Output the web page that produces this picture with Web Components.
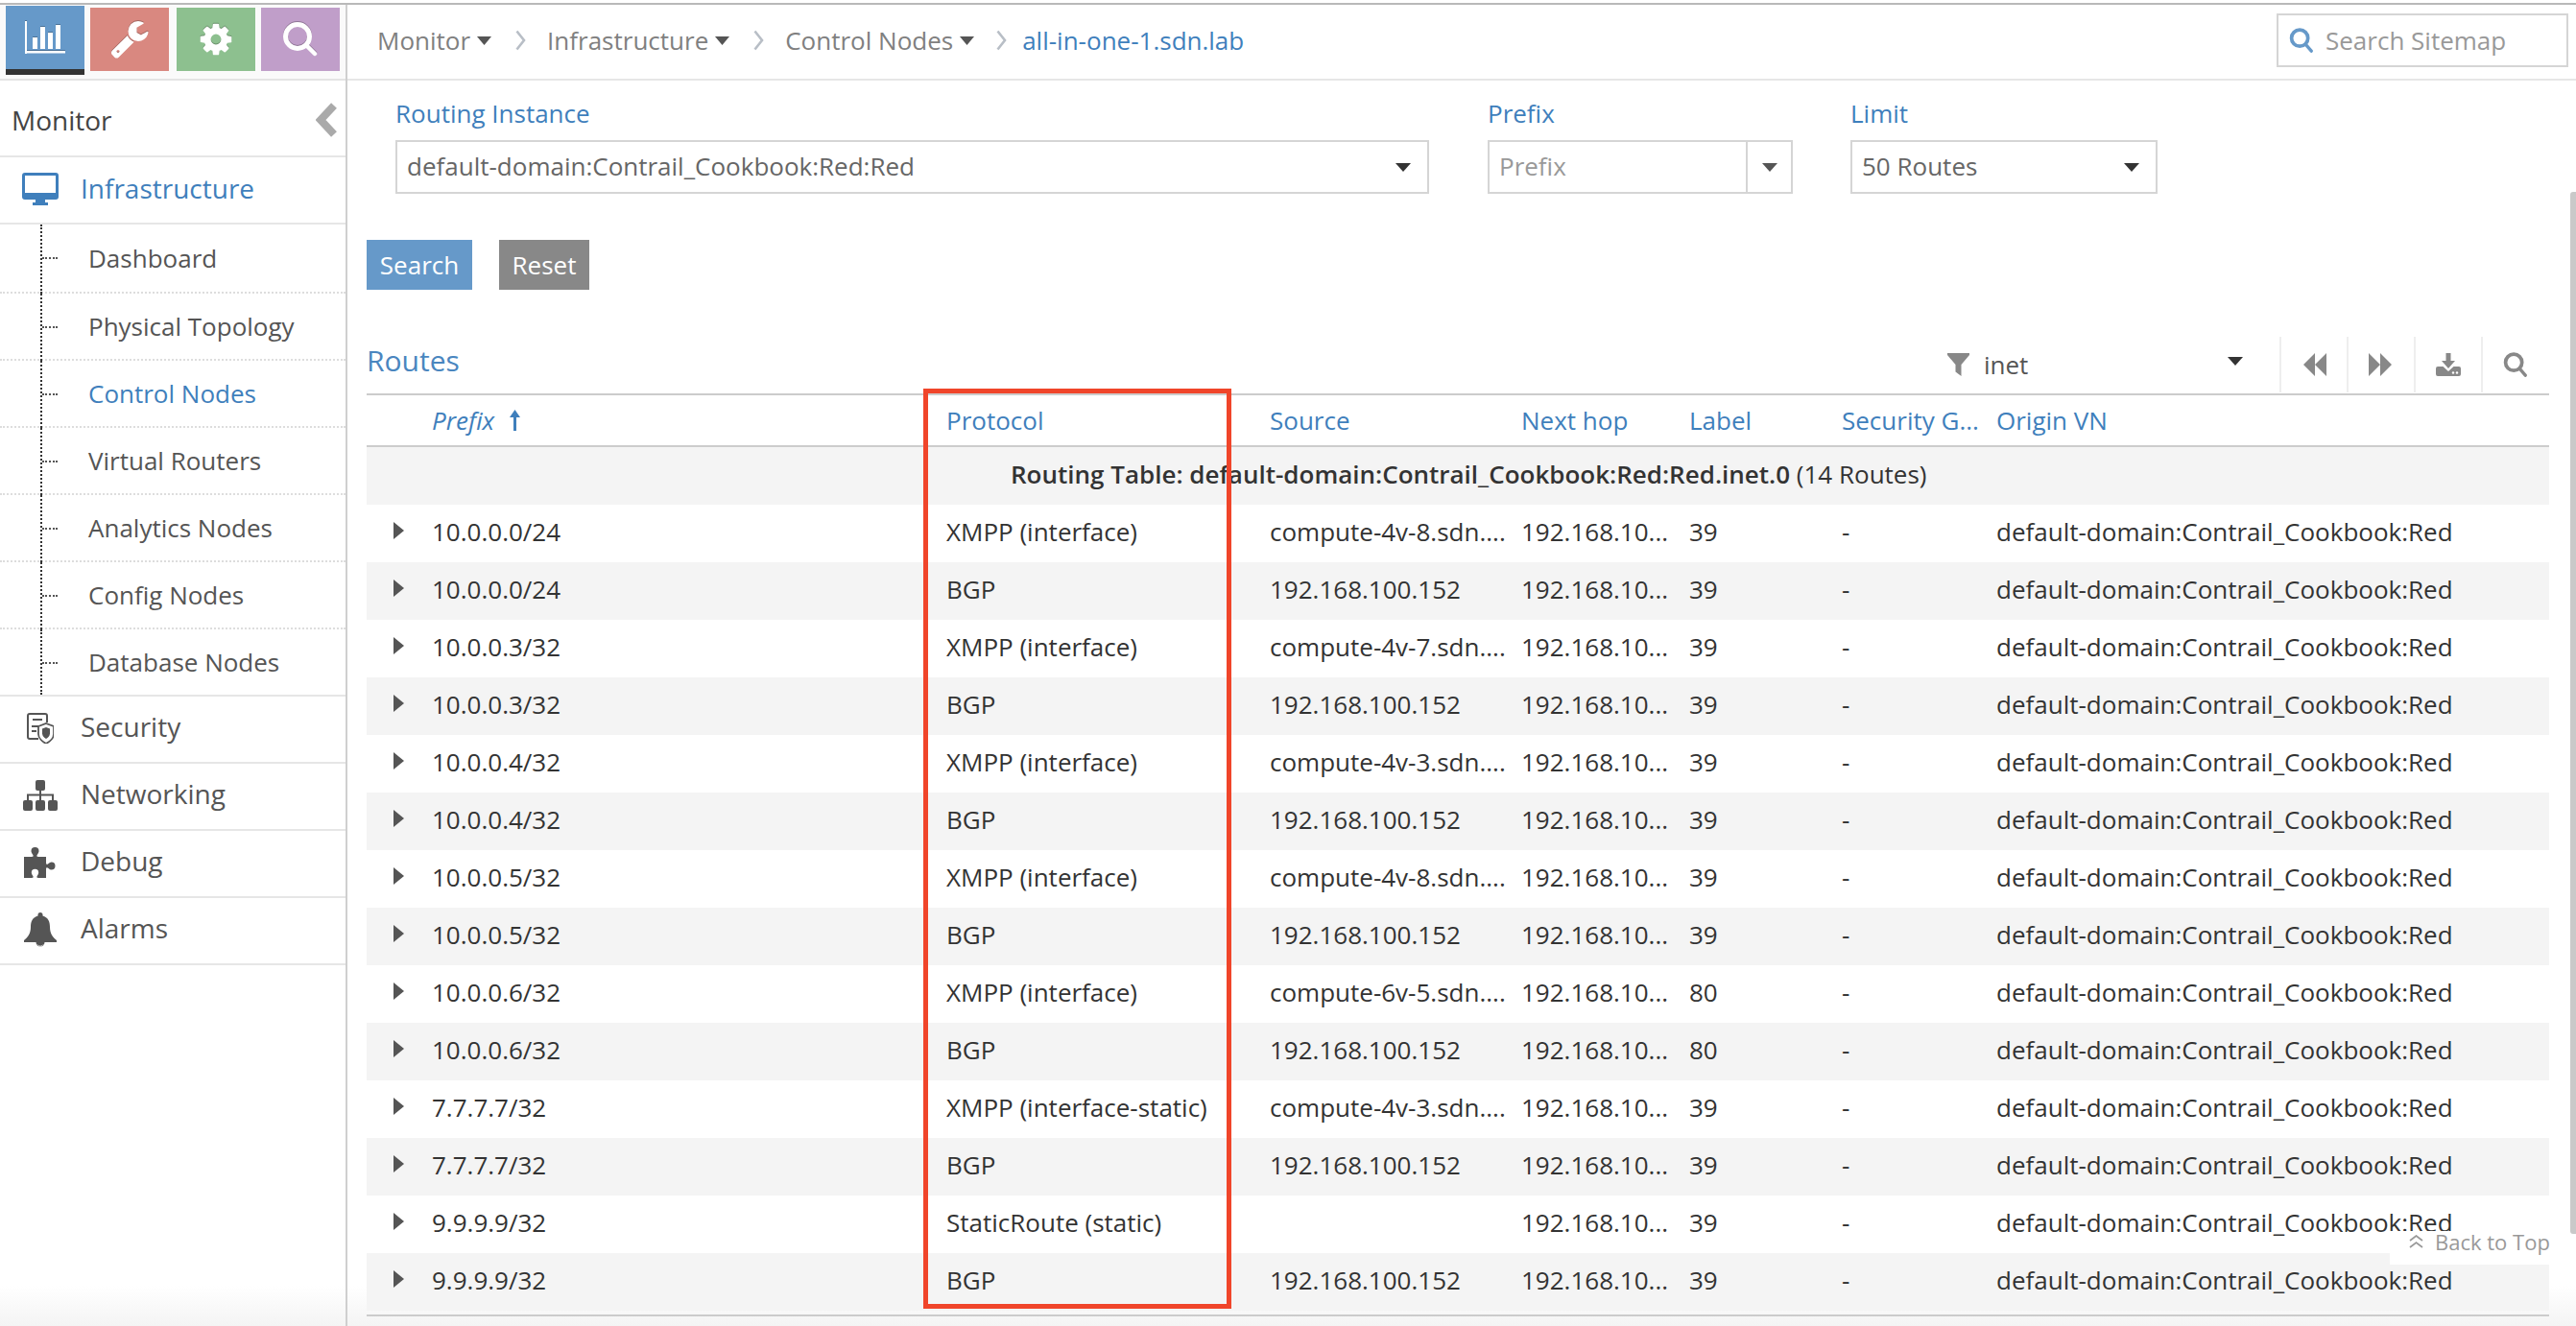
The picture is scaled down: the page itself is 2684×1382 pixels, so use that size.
<!DOCTYPE html>
<html lang="en"><head><meta charset="utf-8"><title>Routes</title>
<style>
html,body{margin:0;padding:0;background:#fff}
body{padding-top:3px;font-family:"Open Sans","Noto Sans",sans-serif;color:#333}
</style></head>
<body>
<contrail-app>
  <side-nav slot="side">
    <top-tab slot="tabs" color="#6699c9" active icon="chart"></top-tab>
    <top-tab slot="tabs" color="#d98880" icon="wrench"></top-tab>
    <top-tab slot="tabs" color="#8dc08f" icon="gear" style="margin-left:2px"></top-tab>
    <top-tab slot="tabs" color="#c09ec9" icon="mag"></top-tab>
    <nav-item icon="desktop" active>Infrastructure</nav-item>
    <nav-sub first>Dashboard</nav-sub>
    <nav-sub>Physical Topology</nav-sub>
    <nav-sub active>Control Nodes</nav-sub>
    <nav-sub>Virtual Routers</nav-sub>
    <nav-sub>Analytics Nodes</nav-sub>
    <nav-sub>Config Nodes</nav-sub>
    <nav-sub last>Database Nodes</nav-sub>
    <nav-item icon="security">Security</nav-item>
    <nav-item icon="sitemap">Networking</nav-item>
    <nav-item icon="puzzle">Debug</nav-item>
    <nav-item icon="bell">Alarms</nav-item>
  </side-nav>
  <bread-crumbs slot="crumbs"></bread-crumbs>
  <route-form slot="main"></route-form>
  <route-table slot="main"></route-table>
</contrail-app>
<script>
const ICONS={
chart:['0 0 82 66','<g fill="#fff"><rect x="20" y="16" width="2" height="34"/><rect x="20" y="47" width="42" height="2.500"/><rect x="28" y="33" width="5" height="12"/><rect x="36" y="22" width="5" height="23"/><rect x="44" y="28" width="5" height="17"/><rect x="52" y="20" width="5" height="25"/></g>'],
wrench:['0 0 1792 1792','<path fill="#fff" d="M448 1472q0-26-19-45t-45-19-45 19-19 45 19 45 45 19 45-19 19-45zm644-420l-682 682q-37 37-90 37-52 0-91-37l-106-108q-38-36-38-90 0-53 38-91l681-681q39 98 114.500 173.500t173.500 114.500zm634-435q0 39-23 106-47 134-164.500 217.500t-258.500 83.500q-185 0-316.500-131.500t-131.500-316.500 131.500-316.500 316.500-131.500q58 0 121.500 16.500t107.500 46.500q16 11 16 28t-16 28l-293 169v224l193 107q5-3 79-48.500t135.500-81 70.500-35.500q15 0 23.500 10t8.500 25z"/>'],
gear:['0 0 1792 1792','<path fill="#fff" d="M1152 896q0-106-75-181t-181-75-181 75-75 181 75 181 181 75 181-75 75-181zm512-109v222q0 12-8 23t-20 13l-185 28q-19 54-39 91 35 50 107 138 10 12 10 25t-9 23q-27 37-99 108t-94 71q-12 0-26-9l-138-108q-44 23-91 38-16 136-29 186-7 28-36 28h-222q-14 0-24.500-8.500t-11.500-21.500l-28-184q-49-16-90-37l-141 107q-10 9-25 9-14 0-25-11-126-114-165-168-7-10-7-23 0-12 8-23 15-21 51-66.500t54-70.500q-27-50-41-99l-183-27q-13-2-21-12.500t-8-23.500v-222q0-12 8-23t19-13l186-28q14-46 39-92-40-57-107-138-10-12-10-24 0-10 9-23 26-36 98.500-107.500t94.500-71.500q13 0 26 10l138 107q44-23 91-38 16-136 29-186 7-28 36-28h222q14 0 24.500 8.500t11.500 21.500l28 184q49 16 90 37l142-107q9-9 24-9 13 0 25 10 129 119 165 170 7 8 7 22 0 12-8 23-15 21-51 66.500t-54 70.500q26 50 41 98l183 28q13 2 21 12.500t8 23.500z"/>'],
mag:['0 0 36 36','<circle cx="15" cy="15" r="12.500" fill="none" stroke="#fff" stroke-width="5"/><path d="M24.500 24.500L33 33" stroke="#fff" stroke-width="4.500" stroke-linecap="round"/>'],
search:['0 0 28 28','<circle cx="12" cy="11.500" r="9.200" fill="none" stroke="currentColor" stroke-width="4"/><path d="M18.500 18.500L25 26" stroke="currentColor" stroke-width="3.600" stroke-linecap="round"/>'],
desktop:['0 0 38 34','<path fill="currentColor" d="M3 0h32a3 3 0 0 1 3 3v22a3 3 0 0 1-3 3H24v3h3v3H11v-3h3v-3H3a3 3 0 0 1-3-3V3a3 3 0 0 1 3-3z"/><rect x="3" y="3" width="32" height="18" fill="#fff"/>'],
security:['0 0 28 32','<path d="M21 10V3a2 2 0 0 0-2-2H3a2 2 0 0 0-2 2v22a2 2 0 0 0 2 2h9" fill="none" stroke="currentColor" stroke-width="2"/><path d="M6 7h10M5 14h7M5 19h5" stroke="currentColor" stroke-width="2"/><path d="M20 11l8 3v8c0 4-4 8-8 10-4-2-8-6-8-10v-8z" fill="#fff" stroke="currentColor" stroke-width="1.800"/><path d="M20 15l4 1.500v5c0 2.500-2 4.500-4 5.500-2-1-4-3-4-5.500v-5z" fill="currentColor"/>'],
sitemap:['0 0 36 32','<g fill="currentColor"><rect x="13" y="0" width="10" height="11" rx="2"/><rect x="0" y="21" width="10" height="11" rx="2"/><rect x="13" y="21" width="10" height="11" rx="2"/><rect x="26" y="21" width="10" height="11" rx="2"/><rect x="17" y="10" width="2" height="12"/><rect x="4" y="14.500" width="28" height="2"/><rect x="4" y="15" width="2" height="7"/><rect x="30" y="15" width="2" height="7"/></g>'],
puzzle:['0 0 34 32','<path fill="currentColor" d="M0 10h8c2 0 2-1 1-2.500C8 6 7.500 5 7.500 4a4 4 0 0 1 8 0c0 1-.5 2-1.500 3.500-1 1.500-1 2.500 1 2.500h8v6c0 2 1 2.500 2.500 1 1-1 2-1.500 3-1.500a4 4 0 0 1 0 8c-1 0-2-.5-3-1.500-1.500-1.500-2.500-1-2.500 1v9H15c-2 0-2-1-1-2.500.7-1 1.200-2 1.200-3a3.700 3.700 0 0 0-7.400 0c0 1 .5 2 1.200 3 1 1.500 1 2.500-1 2.500H0z"/>'],
bell:['0 0 34 36','<path fill="currentColor" d="M17 0a2.500 2.500 0 0 1 2.500 2.500v1C25 5 27 9.500 27 15c0 7 3 11 7 14v2H0v-2c4-3 7-7 7-14 0-5.500 2-10 7.500-11.500v-1A2.500 2.500 0 0 1 17 0z"/><path d="M12.500 31a4.500 4.500 0 0 0 9 0" fill="currentColor"/><path d="M14 33.500a3.500 3.500 0 0 0 6 0" fill="none" stroke="#fff" stroke-width=".8"/>'],
filter:['0 0 23 24','<path fill="currentColor" d="M0 0h23v2l-8.500 10v12l-6-4.500V12L0 2z"/>'],
rew:['0 0 24 24','<path fill="currentColor" d="M12 0v24L0 12zM24 0v24L12 12z"/>'],
fwd:['0 0 24 24','<path fill="currentColor" d="M0 0l12 12L0 24zM12 0l12 12-12 12z"/>'],
dl:['0 0 26 24','<path fill="currentColor" d="M10.500 0h5v8H20l-7 8-7-8h4.500z"/><path fill="currentColor" d="M2 14h5.500l5.500 5 5.500-5H24a2 2 0 0 1 2 2v6a2 2 0 0 1-2 2H2a2 2 0 0 1-2-2v-6a2 2 0 0 1 2-2z"/><circle cx="18" cy="20.500" r="1.200" fill="#fff"/><circle cx="22" cy="20.500" r="1.200" fill="#fff"/>'],
caret:['0 0 16 10','<path fill="currentColor" d="M0 0h16L8 10z"/>'],
crumb:['0 0 11 22','<path d="M1.500 1.500L9 11l-7.500 9.500" fill="none" stroke="currentColor" stroke-width="2.600"/>'],
collapse:['0 0 23 36','<path d="M19 3L5 18l14 15" fill="none" stroke="currentColor" stroke-width="8"/>'],
up:['0 0 11 22','<path fill="currentColor" d="M5.500 0L11 8H7v14H4V8H0z"/>'],
top:['0 0 15 14','<path d="M1 6l6.500-5L14 6M1 13l6.500-5 6.500 5" fill="none" stroke="currentColor" stroke-width="1.700"/>']
};
const ROUTES=[
['10.0.0.0/24','XMPP (interface)','compute-4v-8.sdn....','39'],
['10.0.0.0/24','BGP','192.168.100.152','39'],
['10.0.0.3/32','XMPP (interface)','compute-4v-7.sdn....','39'],
['10.0.0.3/32','BGP','192.168.100.152','39'],
['10.0.0.4/32','XMPP (interface)','compute-4v-3.sdn....','39'],
['10.0.0.4/32','BGP','192.168.100.152','39'],
['10.0.0.5/32','XMPP (interface)','compute-4v-8.sdn....','39'],
['10.0.0.5/32','BGP','192.168.100.152','39'],
['10.0.0.6/32','XMPP (interface)','compute-6v-5.sdn....','80'],
['10.0.0.6/32','BGP','192.168.100.152','80'],
['7.7.7.7/32','XMPP (interface-static)','compute-4v-3.sdn....','39'],
['7.7.7.7/32','BGP','192.168.100.152','39'],
['9.9.9.9/32','StaticRoute (static)','','39'],
['9.9.9.9/32','BGP','192.168.100.152','39']
];
function def(name,css,html,init){
  customElements.define(name,class extends HTMLElement{
    constructor(){super();this.attachShadow({mode:'open'})}
    connectedCallback(){
      this.shadowRoot.innerHTML='<style>'+css+'</style>'+(typeof html==='function'?html(this):html);
      if(init)init(this);
    }
  });
}
def('ui-icon',':host{display:inline-flex;flex:none;line-height:0}svg{display:block;width:100%;height:100%}',
  el=>{const i=ICONS[el.getAttribute('name')];return '<svg viewBox="'+i[0]+'" preserveAspectRatio="none" aria-hidden="true">'+i[1]+'</svg>'});

def('contrail-app',`
:host{display:grid;grid-template-columns:362px 1fr;grid-template-rows:1fr;position:relative;width:2684px;height:1379px;overflow:hidden;box-sizing:border-box;border-top:2px solid #b9b9b9;
 background:linear-gradient(to bottom,#fff 0,#fff 1335px,#f4f4f4 1377px);font-family:"Open Sans","Noto Sans",sans-serif}
.main{display:flex;flex-direction:column;min-width:0}
.red{position:absolute;left:962px;top:400px;width:321px;height:959px;box-sizing:border-box;border:5px solid #f0452a;pointer-events:none}
.bar{position:absolute;left:2678px;top:195px;width:6px;height:1086px;border-radius:3px 0 0 3px;background:#c9c9c9}
.totop{position:absolute;left:2490px;top:1278px;width:166px;height:35px;background:#fff;display:flex;align-items:center;gap:12px;padding:0 0 14px 20px;box-sizing:border-box;color:#999;font-size:22px;line-height:24px;white-space:nowrap}
.totop ui-icon{width:15px;height:14px}
`,`<slot name="side"></slot><div class="main"><slot name="crumbs"></slot><slot name="main"></slot></div>
<div class="red"></div><div class="bar"></div><div class="totop"><ui-icon name="top"></ui-icon><span>Back to Top</span></div>`);

def('top-tab',`
:host{width:82px;height:66px;margin-top:2px;background:var(--c);box-sizing:border-box;display:flex;align-items:center;justify-content:center}
:host([active]){height:72px;margin-top:0;border-bottom:6px solid #333}
ui-icon{filter:drop-shadow(0 -1px 0 rgba(0,0,0,.25))}
`,el=>{el.style.setProperty('--c',el.getAttribute('color'));const n=el.getAttribute('icon');
 const s={chart:'width:82px;height:66px',wrench:'width:42px;height:42px;margin-top:-2px',gear:'width:38px;height:38px',mag:'width:36px;height:36px'}[n];
 return '<ui-icon name="'+n+'" style="'+s+'"></ui-icon>'});

def('side-nav',`
:host{display:block;box-sizing:border-box;width:362px;border-right:2px solid #cfcfcf;height:100%}
.tabs{display:flex;gap:6px;height:79px;box-sizing:border-box;padding:1px 0 0 6px;background:#fafafa;border-bottom:2px solid #e4e4e4}
.head{height:80px;box-sizing:border-box;display:flex;align-items:center;justify-content:space-between;padding:4px 8px 0 12px;font-size:28px;color:#444;border-bottom:2px solid #e6e6e6}
.head ui-icon{width:23px;height:36px;color:#aaa}
`,`<div class="tabs"><slot name="tabs"></slot></div><div class="head"><span>Monitor</span><ui-icon name="collapse"></ui-icon></div><slot></slot>`);

def('nav-item',`
:host{display:flex;align-items:center;height:70px;box-sizing:border-box;border-bottom:2px solid #e6e6e6;font-size:28px;color:#555;padding-bottom:2px}
:host([active]){color:#3f7fbc}
span{margin-bottom:5px}
:host([active]) span{margin-bottom:3px}
.ic{width:84px;display:flex;justify-content:center;box-sizing:border-box}
`,el=>{const n=el.getAttribute('icon');
 const s={desktop:'width:38px;height:34px',security:'width:28px;height:32px',sitemap:'width:36px;height:32px',puzzle:'width:34px;height:32px',bell:'width:34px;height:36px'}[n];
 return '<div class="ic"><ui-icon name="'+n+'" style="'+s+'"></ui-icon></div><span><slot></slot></span>'});

def('nav-sub',`
:host{display:flex;align-items:center;position:relative;height:70px;box-sizing:border-box;border-bottom:2px dotted #ddd;font-size:26px;color:#555;padding-left:92px}
:host([first]){height:72px}
:host([last]){border-bottom:2px solid #e6e6e6}
:host([active]){color:#3f7fbc}
.v{position:absolute;left:42px;top:0;bottom:-2px;border-left:2px dotted #333}
.h{position:absolute;left:44px;top:34px;width:16px;border-top:2px dotted #555}
:host([last]) .v{bottom:0}
`,`<i class="v"></i><i class="h"></i><span><slot></slot></span>`);

def('bread-crumbs',`
:host{display:flex;align-items:center;height:79px;box-sizing:border-box;border-bottom:2px solid #e6e6e6;padding:0 8px 3px 31px;font-size:26px;color:#808080}
.t{white-space:nowrap}
.c{width:15px;height:9px;margin-left:7px;color:#555}
.s{width:11px;height:22px;margin:0 22px 0 25px;color:#b8bec6}
.s.z{margin:0 16px 0 23px}
.l{color:#3f7fbc}
.box{margin-left:auto;width:304px;height:56px;box-sizing:border-box;border:2px solid #d5d5d5;display:flex;align-items:center;padding-left:11px;gap:12px;color:#999}
.box ui-icon{width:26px;height:26px;color:#6699c9}
`,`<span class="t">Monitor</span><ui-icon class="c" name="caret"></ui-icon><ui-icon class="s" name="crumb"></ui-icon>
<span class="t">Infrastructure</span><ui-icon class="c" name="caret"></ui-icon><ui-icon class="s" name="crumb"></ui-icon>
<span class="t">Control Nodes</span><ui-icon class="c" name="caret"></ui-icon><ui-icon class="s z" name="crumb"></ui-icon>
<span class="t l">all-in-one-1.sdn.lab</span>
<div class="box"><ui-icon name="search"></ui-icon><span>Search Sitemap</span></div>`);

def('form-field',`
:host{display:flex;flex-direction:column;flex:none}
label{height:32px;line-height:32px;font-size:26px;color:#3f7fbc;margin:0 0 12px 0}
.box{height:56px;box-sizing:border-box;border:2px solid #d5d5d5;display:flex;align-items:center;font-size:26px;color:#666;padding-left:10px}
.v{flex:1;white-space:nowrap;margin-bottom:3px}
:host([placeholder]) .v{color:#999}
.car{width:16px;height:9px;color:#333;margin-right:17px}
.split{align-self:stretch;border-left:2px solid #d5d5d5;width:45px;display:flex;align-items:center;justify-content:center}
.split ui-icon{width:16px;height:9px;color:#555}
`,el=>{const ph=el.hasAttribute('placeholder');
 return '<label>'+el.getAttribute('label')+'</label><div class="box"><span class="v">'+el.getAttribute('value')+'</span>'+
 (ph?'<div class="split"><ui-icon name="caret"></ui-icon></div>':'<ui-icon class="car" name="caret"></ui-icon>')+'</div>'});

def('route-form',`
:host{display:block;padding:18px 0 0 20px}
.row{display:flex;padding-left:30px}
.btns{display:flex;gap:28px;margin-top:48px}
button{all:unset;height:52px;box-sizing:border-box;display:flex;align-items:center;justify-content:center;color:#fff;font:26px "Open Sans",sans-serif}
.a{width:110px;background:#6699c9}.b{width:94px;background:#888}
`,`<div class="row">
<form-field label="Routing Instance" value="default-domain:Contrail_Cookbook:Red:Red" style="width:1077px"></form-field>
<form-field label="Prefix" value="Prefix" placeholder style="width:318px;margin-left:61px"></form-field>
<form-field label="Limit" value="50 Routes" style="width:320px;margin-left:60px"></form-field>
</div><div class="btns"><button class="a">Search</button><button class="b">Reset</button></div>`);

const COLS='68px 536px 337px 262px 175px 159px 161px 1fr';
def('route-row',`
:host{display:grid;grid-template-columns:${COLS};height:60px;box-sizing:border-box;padding-bottom:5px;align-items:center;font-size:26px;color:#333;white-space:nowrap}
:host(:nth-child(even)){background:#f4f4f4}
.a{padding-left:28px;line-height:0;margin-top:-1px}
.a svg{width:11px;height:18px;display:block}
`,el=>{const d=el.data;return '<div class="a"><svg viewBox="0 0 11 18"><path fill="#555" d="M0 0l11 9L0 18z"/></svg></div><div>'+d[0]+'</div><div>'+d[1]+'</div><div>'+d[2]+
 '</div><div>192.168.10...</div><div>'+d[3]+'</div><div>-</div><div>default-domain:Contrail_Cookbook:Red</div>'});

def('route-table',`
:host{display:block;margin:48px 28px 0 20px}
.tool{height:62px;box-sizing:border-box;display:flex;align-items:center;border-bottom:2px solid #ccc}
h2{margin:0;font-weight:400;font-size:30px;color:#4a86bf;position:relative;top:-5px;flex:1}
.filter{display:flex;align-items:center;width:346px;height:58px;box-sizing:border-box;font-size:26px;color:#555}
.filter .f{width:23px;height:24px;color:#888;margin-right:15px}
.filter span{flex:1}
.filter .c{width:16px;height:9px;color:#333;margin:-8px 38px 0 0}
.btn{width:70px;height:58px;box-sizing:border-box;border-left:2px solid #eee;display:flex;align-items:center;padding-left:21px;color:#888}
.btn ui-icon{width:24px;height:24px}
.head{display:grid;grid-template-columns:${COLS};height:54px;box-sizing:border-box;align-items:center;border-bottom:2px solid #ccc;font-size:26px;color:#3f7fbc;white-space:nowrap}
.head em{display:flex;align-items:center;gap:16px}
.head ui-icon{width:11px;height:22px}
.group{height:60px;box-sizing:border-box;padding:0 0 5px 671px;background:#f4f4f4;display:flex;align-items:center;font-size:26px;color:#333;white-space:nowrap}
.group b{font-weight:600}
.foot{height:4px}
`,`<div class="tool"><h2>Routes</h2>
<div class="filter"><ui-icon class="f" name="filter"></ui-icon><span>inet</span><ui-icon class="c" name="caret"></ui-icon></div>
<div class="btn" style="padding-left:23px"><ui-icon name="rew"></ui-icon></div><div class="btn"><ui-icon name="fwd"></ui-icon></div>
<div class="btn"><ui-icon name="dl" style="width:26px"></ui-icon></div><div class="btn" style="margin-right:2px;width:69px"><ui-icon name="search" style="width:26px;height:26px"></ui-icon></div></div>
<div class="head"><div></div><em>Prefix <ui-icon name="up"></ui-icon></em><div>Protocol</div><div>Source</div><div>Next hop</div><div>Label</div><div>Security G...</div><div>Origin VN</div></div>
<div class="group"><span><b>Routing Table: default-domain:Contrail_Cookbook:Red:Red.inet.0</b> (14 Routes)</span></div>
<div id="r"></div><div class="foot"></div><div style="border-top:2px solid #ccc"></div>`,
el=>{const r=el.shadowRoot.getElementById('r');ROUTES.forEach(d=>{const x=document.createElement('route-row');x.data=d;r.appendChild(x)})});
</script>
</body></html>
